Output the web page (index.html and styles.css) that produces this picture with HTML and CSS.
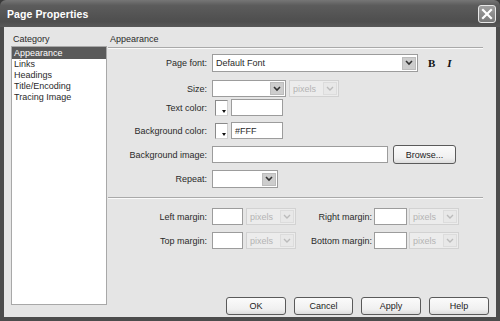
FILE: index.html
```html
<!DOCTYPE html>
<html lang="en">
<head>
  <meta charset="UTF-8" />
  <title>Page Properties</title>
  <link rel="stylesheet" href="styles.css">
</head>
<body>
  <div class="window">
    <div class="titlebar">
      <span class="title">Page Properties</span>
      <span class="close-btn">
        <svg width="12" height="12" viewBox="0 0 12 12"><path d="M2 2 L10 10 M10 2 L2 10" stroke="#fff" stroke-width="2.2" stroke-linecap="square"/></svg>
      </span>
    </div>

    <div class="frame">
      <div class="category">
        <div class="caption">Category</div>
        <ul class="cat-list">
          <li class="selected">Appearance</li>
          <li>Links</li>
          <li>Headings</li>
          <li>Title/Encoding</li>
          <li>Tracing Image</li>
        </ul>
      </div>

      <div class="panel">
        <div class="caption panel-title">Appearance</div>
        <div class="rule"></div>

        <div class="row row-font">
          <label class="lbl">Page font:</label>
          <div class="select w-font"><span class="val">Default Font</span><span class="arrow"><svg width="8" height="6" viewBox="0 0 8 6"><path d="M1 1 L4 4 L7 1" fill="none" stroke="#333" stroke-width="1.6"/></svg></span></div>
          <span class="style-btn bold">B</span>
          <span class="style-btn italic">I</span>
        </div>

        <div class="row row-size">
          <label class="lbl">Size:</label>
          <div class="select w-size"><span class="val"></span><span class="arrow"><svg width="8" height="6" viewBox="0 0 8 6"><path d="M1 1 L4 4 L7 1" fill="none" stroke="#333" stroke-width="1.6"/></svg></span></div>
          <div class="select disabled w-unit"><span class="val">pixels</span><span class="arrow"><svg width="8" height="6" viewBox="0 0 8 6"><path d="M1 1 L4 4 L7 1" fill="none" stroke="#bbb" stroke-width="1.4"/></svg></span></div>
        </div>

        <div class="row row-text">
          <label class="lbl">Text color:</label>
          <span class="swatch"><span class="drop"></span></span>
          <div class="input w-color"></div>
        </div>

        <div class="row row-bg">
          <label class="lbl">Background color:</label>
          <span class="swatch"><span class="drop"></span></span>
          <div class="input w-color">#FFF</div>
        </div>

        <div class="row row-img">
          <label class="lbl">Background image:</label>
          <div class="input w-image"></div>
          <span class="btn browse">Browse...</span>
        </div>

        <div class="row row-repeat">
          <label class="lbl">Repeat:</label>
          <div class="select w-repeat"><span class="val"></span><span class="arrow"><svg width="8" height="6" viewBox="0 0 8 6"><path d="M1 1 L4 4 L7 1" fill="none" stroke="#333" stroke-width="1.6"/></svg></span></div>
        </div>

        <div class="rule rule-2"></div>

        <div class="row row-m1">
          <label class="lbl">Left margin:</label>
          <div class="input w-margin"></div>
          <div class="select disabled w-unit"><span class="val">pixels</span><span class="arrow"><svg width="8" height="6" viewBox="0 0 8 6"><path d="M1 1 L4 4 L7 1" fill="none" stroke="#bbb" stroke-width="1.4"/></svg></span></div>
          <label class="lbl lbl-2">Right margin:</label>
          <div class="input w-margin2"></div>
          <div class="select disabled w-unit"><span class="val">pixels</span><span class="arrow"><svg width="8" height="6" viewBox="0 0 8 6"><path d="M1 1 L4 4 L7 1" fill="none" stroke="#bbb" stroke-width="1.4"/></svg></span></div>
        </div>

        <div class="row row-m2">
          <label class="lbl">Top margin:</label>
          <div class="input w-margin"></div>
          <div class="select disabled w-unit"><span class="val">pixels</span><span class="arrow"><svg width="8" height="6" viewBox="0 0 8 6"><path d="M1 1 L4 4 L7 1" fill="none" stroke="#bbb" stroke-width="1.4"/></svg></span></div>
          <label class="lbl lbl-2">Bottom margin:</label>
          <div class="input w-margin2"></div>
          <div class="select disabled w-unit"><span class="val">pixels</span><span class="arrow"><svg width="8" height="6" viewBox="0 0 8 6"><path d="M1 1 L4 4 L7 1" fill="none" stroke="#bbb" stroke-width="1.4"/></svg></span></div>
        </div>

        <div class="buttons">
          <span class="btn">OK</span>
          <span class="btn">Cancel</span>
          <span class="btn">Apply</span>
          <span class="btn">Help</span>
        </div>
      </div>
    </div>
  </div>
</body>
</html>
```

FILE: styles.css
```css
* {
  box-sizing: border-box;
}

body {
  margin: 0;
  font-family: 'Liberation Sans', Arial, sans-serif;
  font-size: 9px;
  color: #2a2a2a;
  background: #3a3a3a;
}

.window {
  width: 500px;
  height: 321px;
  display: flex;
  flex-direction: column;
}

/* title bar */
.titlebar {
  height: 27px;
  display: flex;
  align-items: center;
  justify-content: space-between;
  padding: 0 4px 0 7px;
  background: linear-gradient(#767676, #5c5c5c 20%, #4e4e4e 80%, #585858);
  border-radius: 6px 6px 0 0;
}

.title {
  color: white;
  font-weight: bold;
  font-size: 10.5px;
  letter-spacing: 0.1px;
}

.close-btn {
  width: 18px;
  height: 18px;
  display: flex;
  align-items: center;
  justify-content: center;
  border: 1px solid #e8e8e8;
  border-radius: 3px;
  background: linear-gradient(#a0a0a0, #7a7a7a);
}

/* frame */
.frame {
  flex: 1;
  display: flex;
  background: #e5e5e5;
  border: 4px solid #4c4c4c;
  border-top: none;
  padding: 6px 7px 2px 7px;
}

.caption {
  height: 13px;
  line-height: 13px;
  padding-left: 2px;
}

.category {
  width: 96px;
  margin-right: 1px;
  display: flex;
  flex-direction: column;
}

.cat-list {
  flex: 1;
  list-style: none;
  margin: 0 0 10px 0;
  padding: 0;
  background: white;
  border: 1px solid #a8a8a8;
}

.cat-list li {
  height: 11px;
  line-height: 11px;
  padding-left: 2px;
}

.cat-list li.selected {
  height: 12px;
  line-height: 12px;
  background: #5a5a5a;
  color: white;
}

/* right panel */
.panel {
  flex: 1;
  display: flex;
  flex-direction: column;
}

.rule {
  margin: 1px 6px 0 0;
  height: 2px;
  border-top: 1px solid #a9a9a9;
  border-bottom: 1px solid #fafafa;
}

.rule-2 {
  margin-top: 9px;
}

.row {
  display: flex;
  align-items: center;
  height: 17px;
  margin-top: 6px;
}

.row-font { margin-top: 5px; height: 18px; }
.row-size { margin-top: 8px; }
.row-text { margin-top: 2px; }
.row-img { height: 19px; }
.row-repeat { height: 18px; }
.row-m1 { margin-top: 9px; }
.row-m2 { margin-top: 7px; }

.lbl {
  width: 99px;
  margin-right: 5px;
  text-align: right;
  white-space: nowrap;
}

.lbl-2 {
  width: 75px;
  margin-left: 1px;
  margin-right: 2px;
}

.input,
.select {
  height: 17px;
  background: white;
  border: 1px solid #9c9c9c;
  display: flex;
  align-items: center;
  padding-left: 3px;
}

.select {
  padding-right: 1px;
}

.row-font .select,
.row-repeat .select {
  height: 18px;
}

.select .val {
  flex: 1;
}

.select .arrow {
  width: 14px;
  height: 13px;
  display: flex;
  align-items: center;
  justify-content: center;
  background: #cdcdcd;
  border: 1px solid #bcbcbc;
}

.select.disabled {
  background: #ececec;
  border-color: #d2d2d2;
  color: #b4b4b4;
}

.select.disabled .arrow {
  background: #e8e8e8;
  border-color: #dcdcdc;
}

.w-font { width: 206px; }
.w-size { width: 74px; margin-right: 3px; }
.w-unit { width: 50px; }
.w-color { width: 52px; }
.w-image { width: 176px; margin-right: 5px; }
.w-repeat { width: 66px; }
.w-margin { width: 31px; margin-right: 3px; }
.w-margin2 { width: 33px; margin-right: 2px; }

.style-btn {
  font-family: 'Liberation Serif', serif;
  font-weight: bold;
  font-size: 11px;
  color: #111;
}

.bold { margin-left: 10px; }
.italic { margin-left: 12px; font-style: italic; }

.swatch {
  width: 13px;
  height: 16px;
  margin-left: 3px;
  margin-right: 3px;
  display: flex;
  align-items: flex-end;
  justify-content: flex-end;
  padding: 0 1px 2px 0;
  background: white;
  border: 1px solid #8a8a8a;
  border-right-color: #d0d0d0;
  border-bottom-color: #d0d0d0;
}

.drop {
  width: 0;
  height: 0;
  border-left: 2px solid transparent;
  border-right: 2px solid transparent;
  border-top: 3px solid #111;
}

.btn {
  width: 60px;
  height: 18px;
  display: flex;
  align-items: center;
  justify-content: center;
  border: 1px solid #5a5a5a;
  border-radius: 3px;
  background: linear-gradient(#fbfbfb, #f0f0f0 70%, #dcdcdc);
  color: #222;
}

.browse {
  width: 63px;
  height: 19px;
}

.buttons {
  margin-top: auto;
  display: flex;
  justify-content: flex-end;
  gap: 8px;
}

.buttons .btn:nth-child(2) {
  width: 59px;
}
```
